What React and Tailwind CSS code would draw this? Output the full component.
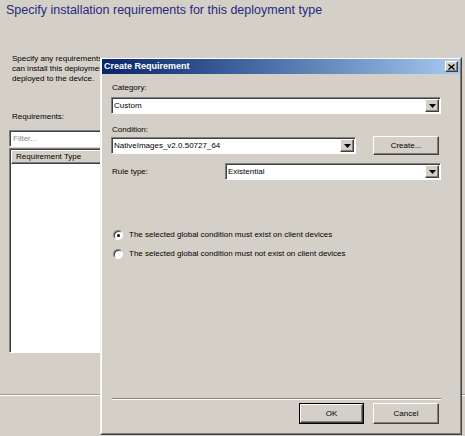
import React from "react";

const raised =
  "border border-t-white border-l-white border-r-[#404040] border-b-[#404040] shadow-[inset_-1px_-1px_0_#808080]";
const sunken =
  "border border-t-[#808080] border-l-[#808080] border-r-white border-b-white shadow-[inset_1px_1px_0_#404040]";

function Arrow() {
  return (
    <svg width="7" height="4" viewBox="0 0 7 4">
      <path d="M0 0H7L3.5 4Z" fill="#000" />
    </svg>
  );
}

function Combo({ className = "", text }) {
  return (
    <div className={`flex items-center h-[17px] bg-white ${sunken} ${className}`}>
      <span className="flex-1 pl-[2px] text-[8px] leading-[10px] truncate">{text}</span>
      <div className={`w-[14px] h-[13px] mr-[1px] bg-[#d4d0c8] flex items-center justify-center ${raised}`}>
        <Arrow />
      </div>
    </div>
  );
}

function Button({ className = "", children }) {
  return (
    <div className={`flex items-center justify-center bg-[#d4d0c8] text-[8px] ${raised} ${className}`}>
      {children}
    </div>
  );
}

function Radio({ checked, label, className = "" }) {
  return (
    <div className={`flex items-center h-[12px] ${className}`}>
      <div className="w-[10px] h-[10px] rounded-full bg-white border border-t-[#808080] border-l-[#808080] border-r-white border-b-white shadow-[inset_1px_1px_0_#404040] flex items-center justify-center">
        {checked && <div className="w-[3px] h-[3px] rounded-full bg-black" />}
      </div>
      <span className="ml-[6px] text-[8px] leading-[10px]">{label}</span>
    </div>
  );
}

export default function App() {
  return (
    <div className="relative w-[465px] h-[436px] overflow-hidden bg-[#d4d0c8] text-black font-['Liberation_Sans',Arial,sans-serif]">
      <div className="pl-[6px] pt-[3px] text-[12.5px] leading-[15px] text-[#28287e]">
        Specify installation requirements for this deployment type
      </div>

      <div className="mt-[36px] pl-[12px] text-[8px] leading-[10px] whitespace-nowrap">
        <p className="w-[88px] overflow-hidden">Specify any requirements that must be met</p>
        <p className="w-[88px] overflow-hidden">can install this deployment type on the device.</p>
        <p>deployed to the device.</p>
      </div>

      <div className="mt-[28px] pl-[12px] text-[8px] leading-[10px]">Requirements:</div>

      <div className={`mt-[8px] ml-[9px] w-[130px] h-[17px] bg-white flex items-center ${sunken}`}>
        <span className="pl-[3px] text-[8px] text-[#8a8a8a]">Filter...</span>
      </div>
      <div className={`mt-[1px] ml-[9px] w-[130px] h-[205px] bg-white ${sunken}`}>
        <div className={`ml-[1px] mt-[1px] h-[14px] bg-[#d4d0c8] flex items-center ${raised}`}>
          <span className="pl-[4px] text-[8px] leading-[10px]">Requirement Type</span>
        </div>
      </div>

      <div className="mt-[41px] h-[2px] border-t border-t-[#a09c94] border-b border-b-white" />

      {/* Dialog window */}
      <div className="absolute left-[100px] top-[57px] w-[362px] h-[378px] bg-[#d4d0c8] border border-t-[#d4d0c8] border-l-[#f4f2ee] border-r-[#404040] border-b-[#404040]">
        <div className="flex flex-col h-full border border-t-white border-l-white border-r-[#808080] border-b-[#808080]">
          <div className="h-[15px] flex items-center justify-between bg-gradient-to-r from-[#0a246a] to-[#a6caf0]">
            <span className="pl-[2px] text-[9px] font-bold text-white leading-[11px]">Create Requirement</span>
            <div className={`mr-[2px] w-[13px] h-[11px] bg-[#d4d0c8] flex items-center justify-center ${raised}`}>
              <svg width="7" height="6" viewBox="0 0 7 6">
                <path d="M0.5 0.5L6.5 5.5M6.5 0.5L0.5 5.5" stroke="#000" strokeWidth="1.4" />
              </svg>
            </div>
          </div>

          <div className="flex flex-col flex-1 pl-[9px] pr-[19px]">
            <div className="mt-[9px] ml-[1px] text-[8px] leading-[10px]">Category:</div>
            <Combo className="mt-[4px]" text="Custom" />

            <div className="mt-[11px] ml-[1px] text-[8px] leading-[10px]">Condition:</div>
            <div className="mt-[1px] flex items-center h-[19px]">
              <Combo className="w-[245px]" text="NativeImages_v2.0.50727_64" />
              <Button className="ml-[17px] w-[66px] h-[19px]">Create...</Button>
            </div>

            <div className="mt-[8px] flex items-center">
              <span className="ml-[1px] w-[113px] text-[8px] leading-[10px]">Rule type:</span>
              <Combo className="flex-1" text="Existential" />
            </div>

            <Radio className="mt-[49px] ml-[2px]" checked label="The selected global condition must exist on client devices" />
            <Radio className="mt-[7px] ml-[2px]" label="The selected global condition must not exist on client devices" />

            <div className="mt-auto ml-[1px] h-[2px] border-t border-t-[#808080] border-b border-b-white" />
            <div className="mt-[3px] mb-[9px] flex justify-end gap-[9px] mr-[2px]">
              <div className="border border-black">
                <Button className="w-[63px] h-[19px]">OK</Button>
              </div>
              <Button className="w-[66px] h-[21px]">Cancel</Button>
            </div>
          </div>
        </div>
      </div>
    </div>
  );
}
